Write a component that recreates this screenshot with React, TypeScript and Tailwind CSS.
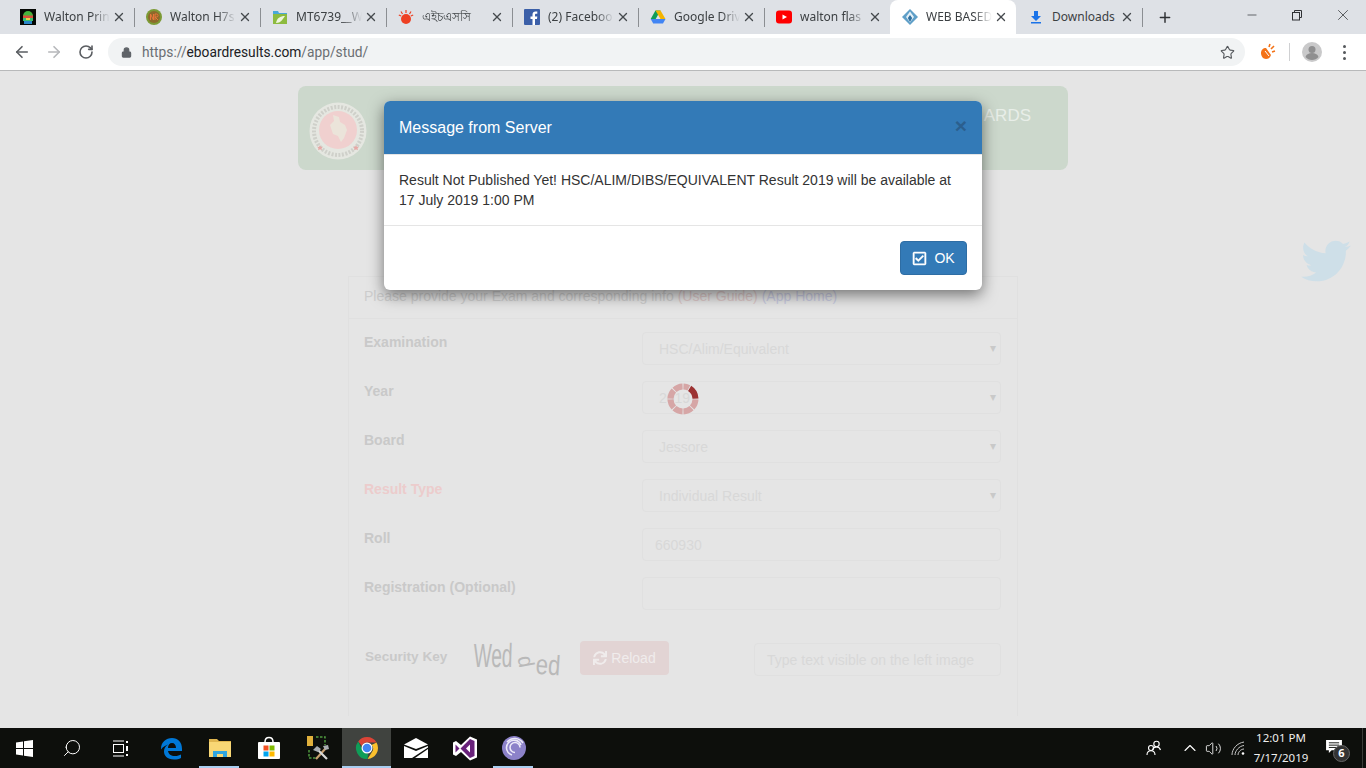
import React from "react";
import { ArrowLeft, ArrowRight, RotateCw, Lock, Star, X, Plus, Minus, Search, ChevronUp, Volume2 } from "lucide-react";
import { FaTwitter, FaRegCheckSquare, FaSync } from "react-icons/fa";

const AndroidIcon = () => (
  <svg width="16" height="16" viewBox="0 0 16 16"><rect width="16" height="16" fill="#050805" /><path d="M3 7a5 5 0 0 1 10 0z" fill="#45b43c" /><rect x="3" y="6.500" width="10" height="2.500" fill="#d8503c" /><rect x="3" y="9" width="10" height="3" fill="#38c070" /><rect x="4" y="12" width="8" height="3" fill="#2a86c8" /><rect x="6" y="9" width="4" height="2" fill="#e9d24a" /></svg>
);
const WaltonIcon = () => (
  <svg width="16" height="16" viewBox="0 0 16 16"><circle cx="8" cy="8" r="8" fill="#7c9a35" /><circle cx="8" cy="8" r="6" fill="#8d6a2b" /><path d="M4.500 11V5l3 6V5M9 11V5h1.500a1.500 1.500 0 0 1 0 3H9l3 3" fill="none" stroke="#e8763a" strokeWidth="1" /></svg>
);
const FolderIcon = () => (
  <svg width="16" height="16" viewBox="0 0 16 16"><path d="M1 2h5l1 2h8v3H1z" fill="#4aa8d8" /><rect x="1" y="5" width="14" height="10" fill="#8dbb3f" /><path d="M4 14c1-5 4-7 9-7-2 2-3 7-9 7z" fill="#eef5dc" /></svg>
);
const SunIcon = () => (
  <svg width="16" height="16" viewBox="0 0 16 16"><circle cx="8" cy="10" r="5" fill="#ee4023" /><path d="M8 1v3M3 2.500l1.500 2.500M13 2.500L11.500 5M.8 6l2.400 1M15.200 6l-2.400 1" stroke="#ee4023" strokeWidth="1.200" /></svg>
);
const FbIcon = () => (
  <svg width="16" height="16" viewBox="0 0 16 16"><rect width="16" height="16" rx="1" fill="#3b5fa8" /><path d="M11 16V10h2l.3-2.500H11V6c0-.8.3-1.200 1.200-1.200h1.100V2.600C13 2.500 12.300 2.500 11.500 2.500 9.700 2.500 8.500 3.600 8.500 5.600v1.900h-2V10h2v6z" fill="#fff" /></svg>
);
const DriveIcon = () => (
  <svg width="16" height="16" viewBox="0 0 16 16"><path d="M5.500 1.500h5L5.700 10H.7z" fill="#0f9d58" /><path d="M5.500 1.500h5l5 8.500h-5z" fill="#f4b400" /><path d="M.7 10h14.800l-2.500 4.500H3.200z" fill="#4285f4" /></svg>
);
const YtIcon = () => (
  <svg width="16" height="16" viewBox="0 0 16 16"><rect y="1.500" width="16" height="13" rx="3" fill="#f00" /><path d="M6.500 5.500v5L11 8z" fill="#fff" /></svg>
);
const WebIcon = () => (
  <svg width="16" height="16" viewBox="0 0 16 16"><path d="M8 0l8 8-8 8-8-8z" fill="#5f9fc8" /><path d="M8 2.500l-4 5.500 4 5.500 4-5.500z" fill="#e4f0f7" /><path d="M8 6l2.200 3L8 13 5.800 9z" fill="#2f6f9f" /></svg>
);
const DlIcon = () => (
  <svg width="16" height="16" viewBox="0 0 16 16"><path d="M6 2h4v5h3l-5 5-5-5h3z" fill="#1a73e8" /><rect x="3" y="13" width="10" height="1.500" fill="#1a73e8" /></svg>
);

const tabs = [
  { t: "Walton Prin", i: <AndroidIcon /> },
  { t: "Walton H7s", i: <WaltonIcon /> },
  { t: "MT6739__W", i: <FolderIcon /> },
  { t: "এইচএসসি", i: <SunIcon /> },
  { t: "(2) Faceboo", i: <FbIcon /> },
  { t: "Google Driv", i: <DriveIcon /> },
  { t: "walton flas", i: <YtIcon /> },
  { t: "WEB BASED", i: <WebIcon />, active: true },
  { t: "Downloads", i: <DlIcon />, plain: true },
];

const Tab = ({ t, i, active, plain, sep }: { t: string; i: React.ReactNode; active?: boolean; plain?: boolean; sep: boolean }) => (
  <div className={`relative flex h-[34px] w-[126px] shrink-0 items-center pl-3 ${active ? "rounded-t-lg bg-white" : ""}`}>
    <span className="flex h-4 w-4 shrink-0 items-center justify-center">{i}</span>
    <span className={`ml-2 w-[66px] overflow-hidden whitespace-nowrap text-[12px] text-[#3c4043] ${plain ? "" : "[mask-image:linear-gradient(to_right,black_72%,transparent_100%)]"}`}>{t}</span>
    <X className="ml-[2px] shrink-0 text-[#45494d]" size={14} strokeWidth={2.3} />
    {sep && <span className="absolute -right-px top-2 h-[19px] w-px bg-[#8b8e92]" />}
  </div>
);

const arcPath = (a0: number, a1: number, r0: number, r1: number) => {
  const p = (a: number, r: number) => {
    const d = ((a - 90) * Math.PI) / 180;
    return `${(16 + r * Math.cos(d)).toFixed(2)} ${(16 + r * Math.sin(d)).toFixed(2)}`;
  };
  return `M${p(a0, r1)} A${r1} ${r1} 0 0 1 ${p(a1, r1)} L${p(a1, r0)} A${r0} ${r0} 0 0 0 ${p(a0, r0)} Z`;
};

const Spinner = () => {
  const segs: [number, number, string][] = [
    [2, 28, "#d6a6a6"],
    [32, 88, "#9c3232"],
    [92, 133, "#d6a6a6"],
    [137, 178, "#d6a6a6"],
    [182, 223, "#d6a6a6"],
    [227, 268, "#d6a6a6"],
    [272, 313, "#d6a6a6"],
    [317, 358, "#d6a6a6"],
  ];
  return (
    <svg width="32" height="32" viewBox="0 0 32 32">
      {segs.map(([a, b, c], k) => <path key={k} d={arcPath(a, b, 9.500, 15.500)} fill={c} />)}
    </svg>
  );
};

const Seal = () => (
  <svg width="58" height="58" viewBox="0 0 58 58">
    <circle cx="29" cy="29" r="28.500" fill="#e5e7e1" />
    <circle cx="29" cy="29" r="24" fill="none" stroke="#cfd0ca" strokeWidth="4" strokeDasharray="2 1.500" />
    <circle cx="29" cy="28" r="19" fill="#f0d0cf" />
    <path d="M24 13l6 2 1 5 5 3 2 5-3 8-3 4-3-6-5-2-3-9 4-4z" fill="#ebe4da" />
    <path d="M11 43l1 2 2-.2-1.500 1.500.5 2-2-1-2 1 .5-2L8 44.800l2 .2zM47 43l1 2 2-.2-1.500 1.500.5 2-2-1-2 1 .5-2-1.500-1.500 2 .2z" fill="#e6a9a6" />
  </svg>
);

const Field = ({ label, value, red, select, plain }: { label: string; value?: string; red?: boolean; select?: boolean; plain?: boolean }) => (
  <div className="flex h-[33px]">
    <div className={`w-[278px] text-[14px] font-bold ${red ? "text-[#eccccc]" : "text-[#c9c9c9]"}`}>{label}</div>
    <div className={`relative flex h-[33px] w-[359px] items-center rounded border border-[#e0e0e0] pt-[2px] text-[14px] text-[#d8d8d8] ${plain ? "pl-3" : "pl-4"}`}>
      {value}
      {select && <span className="absolute right-[4px] top-[6px] text-[12px] text-[#c9c9c9]">▾</span>}
    </div>
  </div>
);

const Captcha = () => (
  <div className="flex h-[34px] w-[88px] items-start text-[#b9b9b9]">
    <span className="-mt-[2px] inline-block w-[40px] origin-top-left skew-x-[-3deg] scale-x-[0.8] scale-y-[1.4] text-[24px] leading-none">Wed</span>
    <span className="mt-[12px] inline-block w-[23px] rotate-[80deg] scale-x-[1.2] scale-y-[1.3] text-center text-[17px] leading-none">d</span>
    <span className="mt-[9px] inline-block w-[25px] origin-top-left rotate-[4deg] scale-x-[1.1] scale-y-[1.4] text-[20px] leading-none">ed</span>
  </div>
);

const EdgeIcon = () => (
  <svg width="24" height="24" viewBox="0 0 24 24"><path d="M2 13C2 6 7 2 13 2c6 0 10 4 10 11v2H9c.4 3 3 5 7 5 2.500 0 4.500-.6 6-1.500v3.500c-2 1-4 1.500-7 1.500-7 0-10-4-10-8 0-3 1-5 4-7-2 1-5 2-7 5zm7-1h8c0-3-1.500-5-4-5s-4 2-4 5z" fill="#0078d7" /></svg>
);
const ExplorerIcon = () => (
  <svg width="22" height="20" viewBox="0 0 22 20"><path d="M0 1h8l2 2h12v3H0z" fill="#e0b64f" /><rect y="4" width="22" height="15" fill="#f8d775" /><path d="M4 19v-6h14v6h-4v-3H8v3z" fill="#2fa5e0" /><rect x="8" y="16" width="6" height="3" fill="#f8d775" /></svg>
);
const StoreIcon = () => (
  <svg width="24" height="24" viewBox="0 0 24 24"><path d="M8 6c0-6 8-6 8 0" fill="none" stroke="#fff" strokeWidth="1.500" /><rect x="1" y="6" width="22" height="17" rx="1" fill="#fff" /><rect x="6.500" y="9.500" width="5" height="5" fill="#f25022" /><rect x="12.500" y="9.500" width="5" height="5" fill="#7fba00" /><rect x="6.500" y="15.500" width="5" height="5" fill="#00a4ef" /><rect x="12.500" y="15.500" width="5" height="5" fill="#ffb900" /></svg>
);
const ToolsIcon = () => (
  <svg width="24" height="26" viewBox="0 0 24 26">
    <rect x="1" y="1" width="6" height="10" fill="#e0b03c" />
    <path d="M10 2h9v8M3 15v8h8" fill="none" stroke="#4f9a3f" strokeWidth="1.500" strokeDasharray="2.500 1.500" />
    <path d="M10 24L20 13" stroke="#c9a070" strokeWidth="2.200" />
    <path d="M21 24L11 14" stroke="#d8d8d8" strokeWidth="2.200" />
    <path d="M7 15l4-4 4 3-3 3zM17 11l5-1 1 4-4 1z" fill="#a9adb2" />
  </svg>
);
const ChromeIcon = () => (
  <svg width="24" height="24" viewBox="0 0 24 24">
    <path d="M12 1a11 11 0 0 1 9.530 5.500H12a5.500 5.500 0 0 0-5.100 3.400L3.200 5.400A11 11 0 0 1 12 1z" fill="#db4437" />
    <path d="M21.530 6.500A11 11 0 0 1 12.500 23l4.300-6.800A5.500 5.500 0 0 0 16.500 9z" fill="#fbc02d" />
    <path d="M12.500 23A11 11 0 0 1 3.200 5.400l4.300 8.700a5.500 5.500 0 0 0 5.600 3.300z" fill="#0f9d58" />
    <circle cx="12" cy="12" r="5.500" fill="#fff" /><circle cx="12" cy="12" r="4.300" fill="#4285f4" />
  </svg>
);
const MailIcon = () => (
  <svg width="24" height="20" viewBox="0 0 24 20"><path d="M12 0l12 6.500L12 11 0 6.500z" fill="#fff" /><path d="M0 8l12 5 12-5v1.500L8 20H0z" fill="#fff" /><path d="M24 11v9H11z" fill="#fff" /></svg>
);
const VsIcon = () => (
  <svg width="24" height="25" viewBox="0 0 24 25"><path d="M17 .5l7 3v18l-7 3-9-8.500L3 20l-3-1.500v-12L3 5l5 4z" fill="#fff" /><path d="M17 3l4.500 2v15L17 22 7.500 12.500zM2.500 8.500l4 4-4 4z" fill="#68217a" /><path d="M17 8.500l-4 4 4 4z" fill="#fff" /></svg>
);
const TorrentIcon = () => (
  <svg width="24" height="24" viewBox="0 0 24 24"><circle cx="12" cy="12" r="12" fill="#8c82c9" /><path d="M21 7A10 10 0 0 0 5 6" fill="none" stroke="#ece9f8" strokeWidth="1.600" /><path d="M19 9a7.500 7.500 0 1 0-9 10" fill="none" stroke="#ece9f8" strokeWidth="1.600" /><path d="M18 11.500a5 5 0 1 0-5 5" fill="none" stroke="#ece9f8" strokeWidth="1.600" /></svg>
);

const TaskSlot = ({ children, active, under }: { children: React.ReactNode; active?: boolean; under?: boolean }) => (
  <div className={`relative flex h-[40px] w-[49px] shrink-0 items-center justify-center ${active ? "bg-[#40433f]" : ""}`}>
    {children}
    {active && <span className="absolute bottom-0 left-0 right-0 h-[2px] bg-[#a8cdf0]" />}
    {under && <span className="absolute bottom-0 left-[4px] h-[2px] w-[40px] bg-[#a8cdf0]" />}
  </div>
);

export default function App() {
  return (
    <div className="flex h-[768px] w-[1366px] flex-col overflow-hidden bg-[#e5e5e5] font-['Liberation_Sans',sans-serif]">
      {/* tab strip */}
      <div className="flex h-[34px] shrink-0 bg-[#dee1e6] pl-2 font-['Noto_Sans','Noto_Sans_CJK_SC',sans-serif]">
        {tabs.map((x, k) => (
          <Tab key={k} t={x.t} i={x.i} active={x.active} plain={x.plain} sep={!x.active && k !== 6} />
        ))}
        <div className="ml-[15px] flex h-[34px] w-4 items-center justify-center text-[#2f3134]">
          <Plus size={17} strokeWidth={2.2} />
        </div>
        <div className="ml-[68px] flex h-[30px] w-[22px] items-center justify-center text-[#2f3134]"><Minus size={14} strokeWidth={1.200} /></div>
        <div className="ml-[23px] flex h-[30px] w-[22px] items-center justify-center">
          <svg width="12" height="12" viewBox="0 0 12 12" fill="none" stroke="#2f3134" strokeWidth="1"><rect x="1.500" y="3.500" width="7" height="7.500" /><path d="M3.500 3.500V1.500h7V8.500H8.500" /></svg>
        </div>
        <div className="ml-[24px] flex h-[30px] w-[22px] items-center justify-center text-[#2f3134]"><X size={18} strokeWidth={1} /></div>
      </div>

      {/* toolbar */}
      <div className="flex h-[37px] shrink-0 items-start border-b border-[#b8b9ba] bg-white pt-1">
        <div className="flex h-[28px] w-[108px] items-center pl-[13px]">
          <ArrowLeft size={18} strokeWidth={2.2} className="text-[#5a5d61]" />
          <ArrowRight size={18} strokeWidth={2.2} className="ml-[14px] text-[#b6b8bb]" />
          <RotateCw size={16} strokeWidth={2.4} className="ml-[15px] text-[#5a5d61]" />
        </div>
        <div className="flex h-[28px] w-[1137px] items-center rounded-full bg-[#f1f3f4] pl-[13px] pr-[10px]">
          <Lock size={11} fill="#5f6368" className="text-[#5f6368]" strokeWidth={2.5} />
          <span className="ml-[10px] flex-1 font-['Roboto',sans-serif] text-[13.75px] text-[#202124]">
            <span className="text-[#6a6e72]">https://</span>eboardresults.com<span className="text-[#6a6e72]">/app/stud/</span>
          </span>
          <Star size={15} strokeWidth={1.800} className="text-[#55585c]" />
        </div>
        <div className="flex h-[28px] flex-1 items-center">
          <svg className="ml-[14px]" width="18" height="20" viewBox="0 0 18 20"><path d="M2 11c0-3 2-5 5-5l5 7c-1 3-3 4-5 4-3 0-5-3-5-6z" fill="#f47216" /><path d="M10 5l1-3M12 7l3-3M13 10l3-1" stroke="#f47216" strokeWidth="1.600" /><path d="M6 9l4 5" stroke="#fff" strokeWidth="1" /></svg>
          <span className="ml-[12px] h-[18px] w-px bg-[#cfd0d2]" />
          <svg className="ml-[12px]" width="20" height="20" viewBox="0 0 20 20"><circle cx="10" cy="10" r="10" fill="#c9c9ca" /><circle cx="10" cy="7.500" r="3.500" fill="#8f8f90" /><path d="M3.500 15c1-3 3.500-4 6.500-4s5.500 1 6.500 4c-1.500 2-4 3-6.500 3s-5-1-6.500-3z" fill="#8f8f90" /></svg>
          <span className="ml-[21px] flex flex-col gap-[3px]">
            <span className="h-[3px] w-[3px] rounded-full bg-[#55585c]" />
            <span className="h-[3px] w-[3px] rounded-full bg-[#55585c]" />
            <span className="h-[3px] w-[3px] rounded-full bg-[#55585c]" />
          </span>
        </div>
      </div>

      {/* page */}
      <div className="relative min-h-0 flex-1 overflow-hidden">
        <div className="ml-[298px] mt-[15px] flex h-[84px] w-[770px] rounded-lg bg-[#ccd8cc] pl-[11px] pt-[16px]">
          <Seal />
          <div className="ml-[4px] mt-px w-[660px] text-right text-[17px] leading-[26px] text-[#e8eee8]">ARDS</div>
        </div>

        <div className="ml-[348px] mt-[106px] w-[670px] border-x border-t border-[#e0e0e0] pb-10">
          <div className="flex h-[42px] items-center border-b border-[#e0e0e0] pb-[2px] pl-[15px] text-[14px] text-[#cdcdcd]">
            Please provide your Exam and corresponding info&nbsp;<span className="text-[#dcc8c8]">(User Guide)</span>&nbsp;<span className="text-[#c8cae0]">(App Home)</span>
          </div>
          <div className="flex flex-col gap-4 pl-[15px] pt-[13px]">
            <Field label="Examination" value="HSC/Alim/Equivalent" select />
            <Field label="Year" value="2019" select />
            <Field label="Board" value="Jessore" select />
            <Field label="Result Type" value="Individual Result" select red />
            <Field label="Roll" value="660930" plain />
            <Field label="Registration (Optional)" plain />
          </div>
          <div className="mt-[31px] flex items-start pl-4">
            <div className="mt-[6px] w-[109px] text-[13.6px] font-bold text-[#c9c9c9]">Security Key</div>
            <Captcha />
            <div className="ml-[18px] flex h-[34px] w-[89px] items-center justify-center gap-1 rounded bg-[#e2d4d4] text-[14px] text-[#f0ecec]">
              <FaSync size={14} />
              Reload
            </div>
            <div className="ml-[85px] mt-[2px] flex h-[33px] w-[247px] items-center rounded border border-[#e0e0e0] pl-3 pt-[2px] text-[14px] text-[#d8d8d8]">Type text visible on the left image</div>
          </div>
        </div>

        {/* twitter */}
        <FaTwitter size={50} className="absolute left-[1301px] top-[165px] text-[#cedfe8]" />

        {/* spinner */}
        <div className="absolute left-[667px] top-[312px]"><Spinner /></div>

        {/* modal */}
        <div className="absolute left-[384px] top-[30px] w-[598px] overflow-hidden rounded-md bg-white shadow-[0_5px_15px_rgba(0,0,0,0.5)]">
          <div className="flex h-[54px] items-center justify-between border-b border-[#e5e5e5] bg-[#337ab7] px-[15px]">
            <span className="text-[16px] text-white">Message from Server</span>
            <span className="-mt-[4px] text-[21px] font-bold leading-none text-[#2b5f8e]">×</span>
          </div>
          <div className="border-b border-[#e5e5e5] p-[15px] text-[14px] leading-5 text-[#333]">
            Result Not Published Yet! HSC/ALIM/DIBS/EQUIVALENT Result 2019 will be available at 17 July 2019 1:00 PM
          </div>
          <div className="flex justify-end p-[15px]">
            <div className="flex h-[34px] w-[67px] items-center justify-center gap-[7px] rounded border border-[#2e6da4] bg-[#337ab7] text-[14px] text-white">
              <FaRegCheckSquare size={15} className="stroke-white stroke-[15]" />
              OK
            </div>
          </div>
        </div>
      </div>

      {/* taskbar */}
      <div className="flex h-[40px] shrink-0 items-center bg-[#0d0f0c] font-['Noto_Sans',sans-serif] text-white">
        <div className="flex h-[40px] w-[48px] items-center justify-center">
          <svg width="17" height="17" viewBox="0 0 17 17" fill="#fff"><path d="M0 2.400l7-1v6.600H0zM8 1.300L17 0v8H8zM0 9h7v6.600l-7-1zM8 9h9v8l-9-1.300z" /></svg>
        </div>
        <div className="flex h-[40px] w-[48px] items-center justify-center"><Search size={20} strokeWidth={1.200} className="-scale-x-100" /></div>
        <div className="flex h-[40px] w-[48px] items-center justify-center">
          <svg width="17" height="17" viewBox="0 0 17 17" fill="none" stroke="#fff" strokeWidth="1"><path d="M1 1h11M1 16h11" /><rect x="1.500" y="4.500" width="10" height="8" /><path d="M15 1v2M15 6v5M15 14v2" strokeWidth="2" /></svg>
        </div>
        <div className="flex pl-[2px]">
          <TaskSlot><EdgeIcon /></TaskSlot>
          <TaskSlot under><ExplorerIcon /></TaskSlot>
          <TaskSlot><StoreIcon /></TaskSlot>
          <TaskSlot><ToolsIcon /></TaskSlot>
          <TaskSlot active><ChromeIcon /></TaskSlot>
          <TaskSlot><MailIcon /></TaskSlot>
          <TaskSlot><VsIcon /></TaskSlot>
          <TaskSlot under><TorrentIcon /></TaskSlot>
        </div>
        <div className="ml-[608px] flex items-center">
          <svg width="16" height="16" viewBox="0 0 16 16" fill="none" stroke="#fff" strokeWidth="1.100"><circle cx="10.500" cy="4" r="2.700" /><path d="M6.500 10c.5-1.800 2-3 4-3s3.500 1 4 3" /><circle cx="5" cy="8" r="2.500" /><path d="M1 15c0-2.500 1.700-4.300 4-4.300S9 12.500 9 15" /></svg>
          <ChevronUp size={20} strokeWidth={1.300} className="ml-[18px]" />
          <Volume2 size={17} strokeWidth={1.200} className="ml-[5px]" />
          <svg className="ml-[9px]" width="15" height="15" viewBox="0 0 15 15" fill="none" stroke="#c8c8c8" strokeWidth="1"><path d="M1 14C1 8 6 2 13 1M4 14C4 10 8 5 13 4.500M7 14c0-3 3-6 6-6" /><circle cx="12" cy="12.500" r="1.300" fill="#fff" stroke="none" /></svg>
        </div>
        <div className="flex w-[70px] flex-col items-center text-[11.5px] leading-[20px] text-[#eee]">
          <span>12:01 PM</span>
          <span>7/17/2019</span>
        </div>
        <div className="relative ml-[10px] h-[40px] w-[28px]">
          <svg className="absolute left-0 top-[12px]" width="16" height="14" viewBox="0 0 17 15"><path d="M0 0h17v11H6l-3 3v-3H0z" fill="#fff" /><path d="M3 3h11M3 5.500h11M3 8h8" stroke="#0d0f0c" strokeWidth="1" /></svg>
          <span className="absolute left-[7px] top-[17px] flex h-[17px] w-[17px] items-center justify-center rounded-full border border-[#666] bg-[#333] text-[11px] font-bold">6</span>
        </div>
        <span className="ml-[8px] h-[40px] w-px bg-[#3a3c38]" />
      </div>
    </div>
  );
}
